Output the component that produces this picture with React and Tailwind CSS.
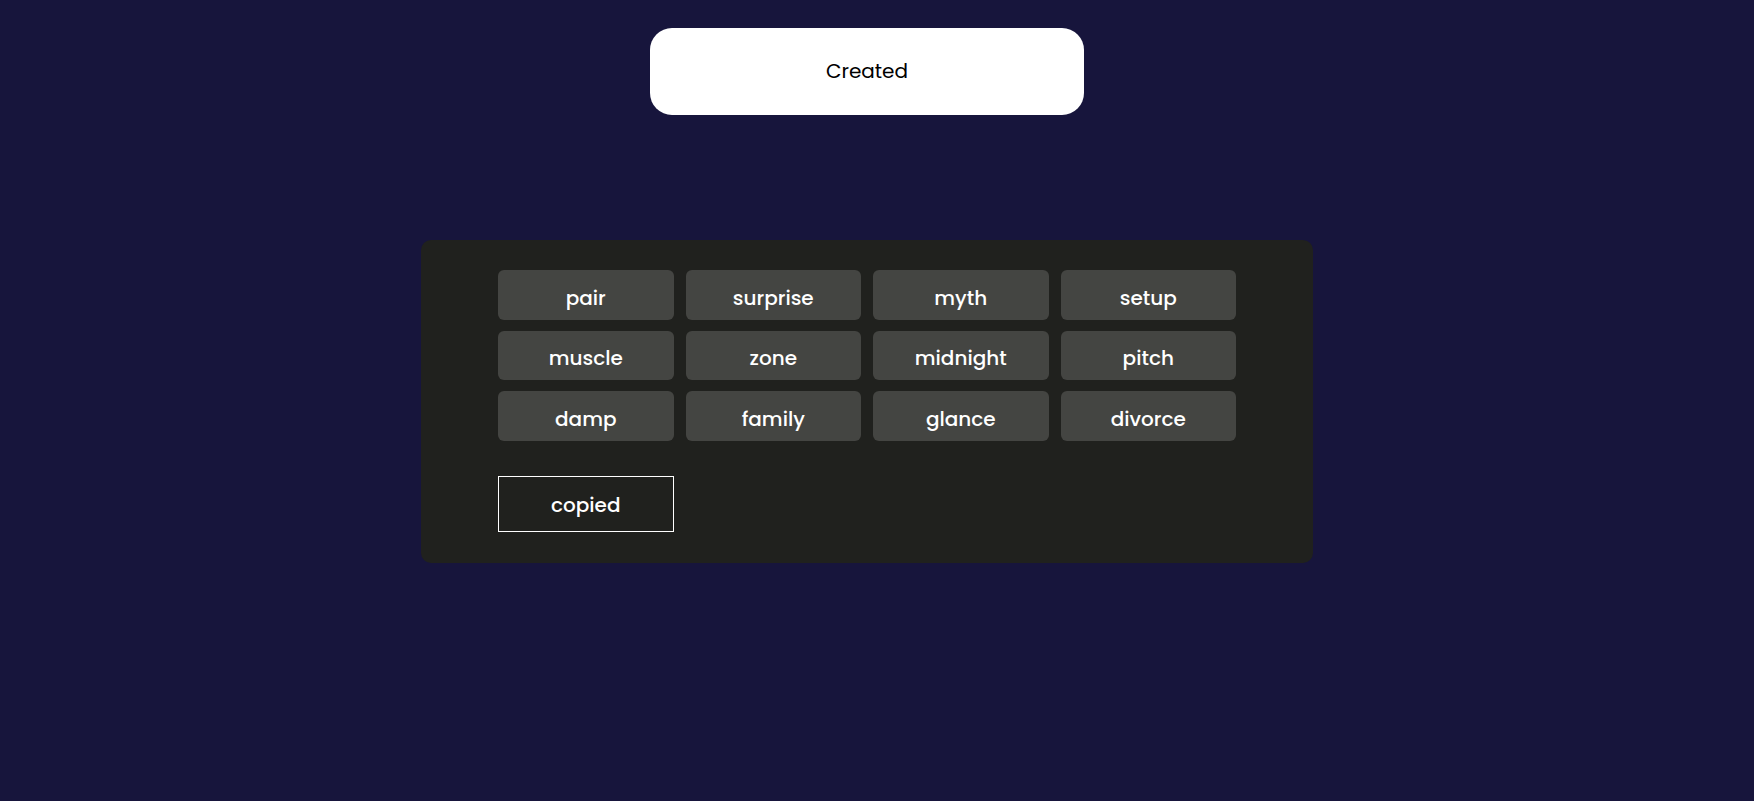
import React from "react";

const words = [
  "pair", "surprise", "myth", "setup",
  "muscle", "zone", "midnight", "pitch",
  "damp", "family", "glance", "divorce",
];

export default function App() {
  return (
    <div
      className="min-h-[801px] w-full bg-[#17153c] flex flex-col items-center pr-[20px]"
      style={{ fontFamily: '"Poppins", "Open Sans", "Noto Sans", sans-serif' }}
    >
      <div className="mt-[28px] w-[434px] h-[87px] pb-[2px] bg-white rounded-[22px] flex items-center justify-center text-black text-[20px]">
        Created
      </div>
      <div className="mt-[125px] w-[892px] h-[323px] bg-[#20211e] rounded-[10px] pt-[30px] pl-[77px]">
        <div className="grid grid-cols-4 w-[738px] gap-x-[12px] gap-y-[11px]">
          {words.map((w) => (
            <div
              key={w}
              className="h-[49.5px] pt-[6px] bg-[#444542] rounded-[6px] flex items-center justify-center text-white text-[20px] font-medium"
            >
              {w}
            </div>
          ))}
        </div>
        <div className="mt-[35px] w-[175.5px] h-[56px] pt-[2px] border border-white flex items-center justify-center text-white text-[20px] font-medium">
          copied
        </div>
      </div>
    </div>
  );
}
